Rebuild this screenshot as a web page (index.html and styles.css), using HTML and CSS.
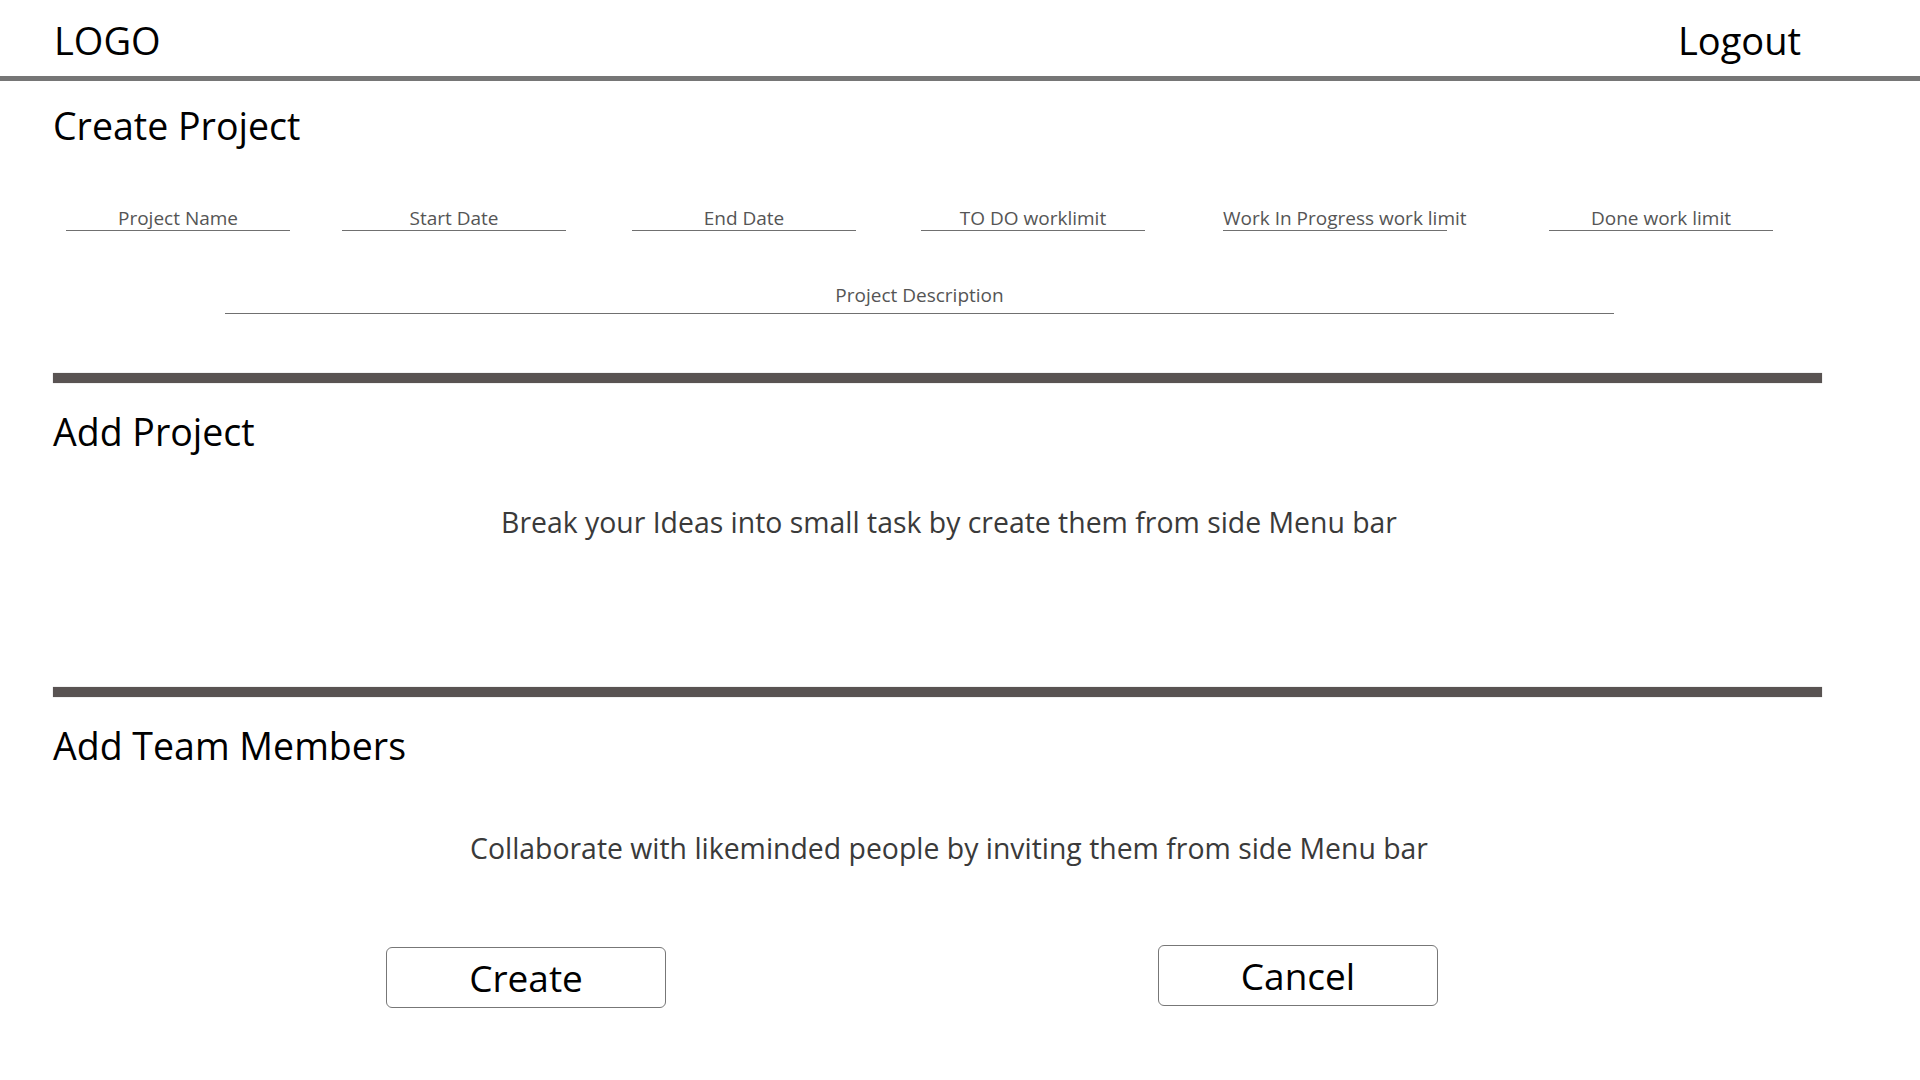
FILE: index.html
```html
<!DOCTYPE html>
<html lang="en">
<head>
    <meta charset="UTF-8">
    <meta name="viewport" content="width=device-width, initial-scale=1.0">
    <title>Create Project</title>
    <link rel="stylesheet" href="styles.css">
</head>
<body>
    <header class="topbar">
        <div class="logo">LOGO</div>
        <a class="logout" href="#">Logout</a>
    </header>

    <main class="page">
        <section class="create">
            <h2 class="section-title">Create Project</h2>
            <div class="fields">
                <div class="field">Project Name</div>
                <div class="field">Start Date</div>
                <div class="field">End Date</div>
                <div class="field">TO DO worklimit</div>
                <div class="field">Work In Progress work limit</div>
                <div class="field">Done work limit</div>
            </div>
            <div class="field description">Project Description</div>
        </section>

        <hr class="divider first">

        <section class="add-project">
            <h2 class="section-title">Add Project</h2>
            <p class="hint">Break your Ideas into small task by create them from side Menu bar</p>
        </section>

        <hr class="divider second">

        <section class="team">
            <h2 class="section-title">Add Team Members</h2>
            <p class="hint">Collaborate with likeminded people by inviting them from side Menu bar</p>
        </section>

        <div class="actions">
            <button class="btn create-btn">Create</button>
            <button class="btn cancel-btn">Cancel</button>
        </div>
    </main>
</body>
</html>
```

FILE: styles.css
```css
body {
    margin: 0;
    font-family: "Open Sans", "Noto Sans", sans-serif;
    background-color: #ffffff;
    color: #000000;
}
.topbar {
    display: flex;
    justify-content: space-between;
    align-items: flex-start;
    height: 81px;
    padding: 6px 119px 0 54px;
    box-sizing: border-box;
    border-bottom: 5px solid #767676;
    font-size: 38px;
    line-height: 68px;
}
.logout {
    color: #000000;
    text-decoration: none;
}
.page {
    padding: 0 75px 0 53px;
}
.section-title {
    margin: 0;
    font-size: 37.5px;
    font-weight: normal;
    line-height: 50px;
}
.create .section-title {
    padding-top: 20px;
}
.fields {
    display: flex;
    margin: 55px 0 0 13px;
}
.field {
    width: 224px;
    flex: none;
    font-size: 19px;
    line-height: 24px;
    color: #555555;
    text-align: center;
    white-space: nowrap;
    border-bottom: 1.5px solid #707070;
}
.fields .field:nth-child(2) { margin-left: 52px; }
.fields .field:nth-child(3) { margin-left: 66px; }
.fields .field:nth-child(4) { margin-left: 65px; }
.fields .field:nth-child(5) { margin-left: 78px; }
.fields .field:nth-child(6) { margin-left: 102px; }
.description {
    width: 1389px;
    margin: 52px 0 0 172px;
    padding-bottom: 6px;
}
.divider {
    height: 10px;
    margin: 0 23px 0 0;
    border: none;
    background-color: #595352;
    box-shadow: 0 0 1px #aaaaaa;
}
.divider.first {
    margin-top: 59px;
}
.divider.second {
    margin-top: 145px;
}
.add-project .section-title,
.team .section-title {
    margin-top: 24px;
}
.hint {
    margin: 45px 0 0 0;
    font-size: 28.4px;
    line-height: 40px;
    color: #3a3a3a;
    text-align: center;
}
.team .hint {
    margin-top: 57px;
}
.actions {
    display: flex;
    align-items: flex-start;
    gap: 492px;
    margin-top: 79px;
    padding-left: 333px;
}
.btn {
    width: 280px;
    height: 61px;
    padding: 0;
    font-family: inherit;
    font-size: 37px;
    color: #000000;
    background-color: #ffffff;
    border: 1px solid #777777;
    border-radius: 6px;
    cursor: pointer;
}
.cancel-btn {
    margin-top: -2px;
}
```
